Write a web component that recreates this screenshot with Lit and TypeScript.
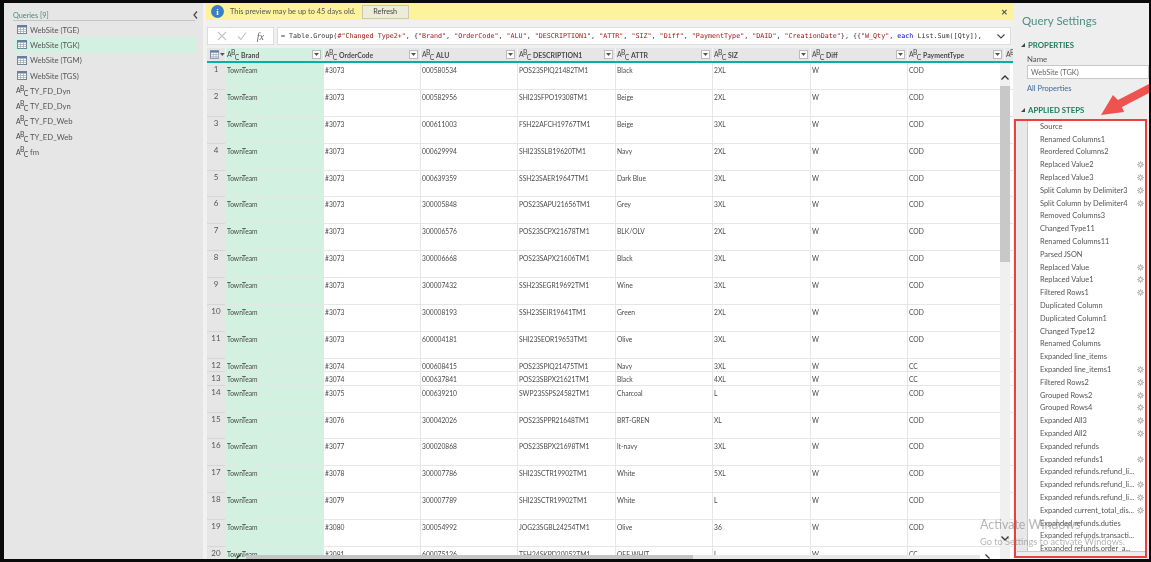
import { LitElement, html, css, svg } from "lit";
import { customElement } from "lit/decorators.js";

const QUERIES: [string, string, boolean][] = [
  ["WebSite (TGE)", "t", false], ["WebSite (TGK)", "t", true], ["WebSite (TGM)", "t", false], ["WebSite (TGS)", "t", false],
  ["TY_FD_Dyn", "a", false], ["TY_ED_Dyn", "a", false], ["TY_FD_Web", "a", false], ["TY_ED_Web", "a", false], ["fm", "a", false],
];
const COLS = ["Brand", "OrderCode", "ALU", "DESCRIPTION1", "ATTR", "SIZ", "Diff", "PaymentType", ""];
const ROWS: [string, string, string, string, string, string, boolean?][] = [
  ["#3073", "000580534", "POS23SPIQ21482TM1", "Black", "2XL", "COD"],
  ["#3073", "000582956", "SHI23SFPO19308TM1", "Beige", "2XL", "COD"],
  ["#3073", "000611003", "FSH22AFCH19767TM1", "Beige", "3XL", "COD"],
  ["#3073", "000629994", "SHI23SSLB19620TM1", "Navy", "2XL", "COD"],
  ["#3073", "000639359", "SSH23SAER19647TM1", "Dark Blue", "3XL", "COD"],
  ["#3073", "300005848", "POS23SAPU21656TM1", "Grey", "3XL", "COD"],
  ["#3073", "300006576", "POS23SCPX21678TM1", "BLK/OLV", "2XL", "COD"],
  ["#3073", "300006668", "POS23SAPX21606TM1", "Black", "3XL", "COD"],
  ["#3073", "300007432", "SSH23SEGR19692TM1", "Wine", "3XL", "COD"],
  ["#3073", "300008193", "SSH23SEIR19641TM1", "Green", "2XL", "COD"],
  ["#3073", "600004181", "SHI23SEOR19653TM1", "Olive", "3XL", "COD"],
  ["#3074", "000608415", "POS23SPIQ21475TM1", "Navy", "3XL", "CC", true],
  ["#3074", "000637841", "POS23SBPX21621TM1", "Black", "4XL", "CC", true],
  ["#3075", "000639210", "SWP23SSPS24582TM1", "Charcoal", "L", "COD"],
  ["#3076", "300042026", "POS23SPPR21648TM1", "BRT-GREN", "XL", "COD"],
  ["#3077", "300020868", "POS23SBPX21698TM1", "lt-navy", "3XL", "COD"],
  ["#3078", "300007786", "SHI23SCTR19902TM1", "White", "5XL", "COD"],
  ["#3079", "300007789", "SHI23SCTR19902TM1", "White", "L", "COD"],
  ["#3080", "300054992", "JOG23SGBL24254TM1", "Olive", "36", "COD"],
  ["#3081", "600075126", "TEH24SKPD20052TM1", "OFF WHIT", "L", "CC"],
];
const STEPS: [string, boolean][] = [
  ["Source", false], ["Renamed Columns1", false], ["Reordered Columns2", false], ["Replaced Value2", true], ["Replaced Value3", true],
  ["Split Column by Delimiter3", true], ["Split Column by Delimiter4", true], ["Removed Columns3", false], ["Changed Type11", false],
  ["Renamed Columns11", false], ["Parsed JSON", false], ["Replaced Value", true], ["Replaced Value1", true], ["Filtered Rows1", true],
  ["Duplicated Column", false], ["Duplicated Column1", false], ["Changed Type12", false], ["Renamed Columns", false],
  ["Expanded line_items", false], ["Expanded line_items1", true], ["Filtered Rows2", true], ["Grouped Rows2", true], ["Grouped Rows4", true],
  ["Expanded All3", true], ["Expanded All2", true], ["Expanded refunds", false], ["Expanded refunds1", true],
  ["Expanded refunds.refund_li...", false], ["Expanded refunds.refund_li...", true], ["Expanded refunds.refund_li...", true],
  ["Expanded current_total_dis...", true], ["Expanded refunds.duties", false], ["Expanded refunds.transacti...", false], ["Expanded refunds.order_a...", false],
];

const abc = () => html`<span class="abc"><span class="la">A</span><span class="lb">B</span><span class="lc">C</span></span>`;
const tableIcon = svg`<svg class="ti" viewBox="0 0 10 9" width="10" height="9"><rect x=".5" y=".5" width="9" height="8" fill="#fff" stroke="#6f8296"/><rect x=".5" y=".5" width="9" height="2" fill="#5f7f9f"/><path d="M3.5 2.5v6M6.5 2.5v6M.5 4.5h9M.5 6.5h9" stroke="#9aa6b2" stroke-width=".7"/></svg>`;
const gear = svg`<svg class="gear" viewBox="0 0 8 8" width="7" height="7"><circle cx="4" cy="4" r="2" fill="none" stroke="#999" stroke-width="1.1"/><path d="M4 0v1.600M4 6.400V8M0 4h1.600M6.400 4H8M1.200 1.200l1.100 1.100M5.700 5.700l1.100 1.100M6.800 1.200L5.700 2.300M2.300 5.700L1.200 6.800" stroke="#999" stroke-width=".8"/></svg>`;
const drop = svg`<svg viewBox="0 0 5 3" width="5" height="3"><path d="M0 0h5L2.500 3z" fill="#555"/></svg>`;

@customElement("app-root")
export class AppRoot extends LitElement {
  static styles = css`
    :host { display: block; width: 1151px; height: 562px; overflow: hidden; font-family: "Lato", "Open Sans", sans-serif; color: #444; }
    * { box-sizing: border-box; }
    .app { position: relative; width: 1151px; height: 562px; display: flex; background: #eee; border: solid #0a0a0a; border-width: 3px 2px 3px 4px; filter: blur(0.4px); overflow: hidden; }

    .abc { display: inline-flex; justify-content: flex-start; width: 11px; height: 12px; font-size: 6.800px; line-height: 7px; letter-spacing: -0.6px; color: #444; flex: none; font-weight: 400; }
    .la { align-self: center; }
    .lb { align-self: flex-start; }
    .lc { align-self: flex-end; }

    .left { width: 199px; background: #e6e6e6; padding: 9px 0 0 9px; flex: none; }
    .lhead { display: flex; align-items: center; height: 8px; }
    .qt { width: 178px; line-height: 8px; font-size: 7.300px; color: #3f8f6f; }
    .lline { width: 182px; height: 1px; background: #c4c4c4; margin-bottom: 1px; }
    .chev { margin-left: 2px; margin-top: -3px; }
    .q { width: 182px; height: 15.3px; display: flex; align-items: center; gap: 3px; padding-left: 3px; font-size: 7.700px; color: #555; }
    .q.sel { background: #d3f1e1; }
    .qi { width: 11px; display: flex; justify-content: center; flex: none; }

    .sep { width: 3px; background: #f2f2f2; flex: none; }

    .main { width: 807px; flex: none; display: flex; flex-direction: column; background: #f0f0f0; position: relative; overflow: hidden; }
    .warn { height: 17px; background: #fdf39d; display: flex; align-items: center; padding-left: 5px; font-size: 7.400px; color: #555; flex: none; }
    .info { width: 13px; height: 13px; border-radius: 50%; background: #3a7fc4; color: #fff; font: bold 9px "Liberation Serif", serif; display: flex; align-items: center; justify-content: center; margin-right: 6px; }
    .refresh { margin-left: 6px; width: 47px; height: 14px; background: #ececd8; border: 1px solid #c8c8b4; font-size: 7.200px; display: flex; align-items: center; justify-content: center; color: #444; }
    .close { margin-left: auto; margin-right: 5px; font-size: 8px; color: #555; font-weight: 700; }

    .fbar { display: flex; height: 18px; margin: 7px 2px 3px 1px; gap: 3px; flex: none; }
    .fbtn { width: 67px; background: #fff; border: 1px solid #dcdcdc; display: flex; align-items: center; justify-content: space-around; padding: 0 4px; }
    .fx { font: italic 10px "Liberation Serif", serif; color: #666; }
    .formula { flex: 1; background: #fff; border: 1px solid #dcdcdc; display: flex; align-items: center; padding-left: 3px; font: 6.700px "DejaVu Sans Mono", monospace; color: #333; white-space: pre; overflow: hidden; }
    .str { color: #a31515; }
    .kw { color: #0000e0; }
    .fexp { margin-left: auto; margin-right: 5px; flex: none; }

    .grid { margin-left: 1px; flex: 1; overflow: hidden; }
    .r { display: grid; grid-template-columns: 18px 98px 97px 97px 98px 97px 98px 97px 97px 20px; }
    .hr { height: 15px; background: #e6e6e6; border-bottom: 2px solid #00b39e; }
    .hc { display: flex; align-items: center; height: 13px; padding: 0 2px 0 1px; gap: 3px; font-size: 6.900px; font-weight: 700; color: #4a4a4a; border-left: 1px solid #f6f6f6; overflow: hidden; }
    .hc.sel { background: #d3f1e1; }
    .nm { flex: 1; white-space: nowrap; }
    .dd { width: 9px; height: 9px; background: #fff; border: 1px solid #bbb; display: flex; align-items: center; justify-content: center; flex: none; }
    .corner { display: flex; align-items: center; gap: 1px; padding-left: 3px; }
    .n { background: #e6e6e6; font-size: 8px; text-align: center; color: #555; border-bottom: 1.500px solid #d6d6d6; padding-top: 1px; }
    .cell { background: #fff; font-size: 6.700px; color: #4a4a4a; padding: 3px 0 0 1px; border-left: 1px solid #e6e6e6; border-bottom: 1.500px solid #e6e6e6; white-space: nowrap; overflow: hidden; }
    .cell.sel { background: #d3f1e1; }
    .tall { height: 26.9px; }
    .short { height: 13.45px; }

    .vs { position: absolute; right: 3px; top: 60px; bottom: 0; width: 10px; background: #f0f0f0; display: flex; flex-direction: column; align-items: center; }
    .up { height: 23px; display: flex; align-items: center; flex: none; padding-top: 6px; }
    .vth { width: 10px; height: 176px; background: #c8c8c8; flex: none; }
    .dn { margin-top: auto; margin-bottom: 15px; }
    .hs { position: absolute; left: 40px; right: 33px; bottom: 0; height: 4px; background: #e8e8e8; }
    .hth { width: 447px; height: 4px; background: #c4c4c4; }
    .hl, .hrr { position: absolute; bottom: 0; display: flex; }
    .hl { left: 30px; }
    .hrr { right: 23px; }

    .right { flex: 1; background: #eee; padding: 10px 0 0 9px; min-width: 0; position: relative; }
    .title { font-size: 11.500px; line-height: 16px; color: #4e8f80; white-space: nowrap; }
    .sec { font-size: 7.800px; font-weight: 700; color: #1e7d5d; display: flex; align-items: center; gap: 3px; height: 10px; margin-left: -1px; white-space: nowrap; }
    .tri { width: 0; height: 0; border-style: solid; border-width: 0 0 4px 4px; border-color: transparent transparent #444 transparent; }
    .sec.p { margin-top: 11px; }
    .lab { font-size: 7.800px; margin: 5px 0 0 5px; height: 9px; line-height: 9px; color: #555; }
    .input { height: 14px; margin: 1px 0 0 5px; background: #fff; border: 1px solid #c8c8c8; font-size: 7.400px; display: flex; align-items: center; padding-left: 3px; color: #666; }
    .link { font-size: 7.500px; color: #3d6a9e; margin: 5px 0 0 5px; height: 10px; line-height: 10px; }
    .sec.a { margin-top: 11px; }
    .steps { margin: 4px 0 0 -5px; display: flex; width: 128px; height: 433px; overflow: hidden; border-bottom: 1px solid #c8c8c8; }
    .strip { width: 10px; background: #e8e8e8; flex: none; }
    .list { flex: 1; background: #fff; padding-top: 1px; border-left: 1px solid #c8c8c8; overflow: hidden; }
    .s { height: 12.8px; display: flex; align-items: center; padding-left: 12px; font-size: 7.450px; color: #555; white-space: nowrap; }
    .gear { margin-left: auto; margin-right: 1px; flex: none; }

    .redbox { position: absolute; left: 1010px; top: 116px; width: 133px; height: 439px; border: 2px solid #e8413f; pointer-events: none; }
    .arrow { position: absolute; left: 1090px; top: 72px; }
    .wm1, .wm2 { position: absolute; white-space: nowrap; color: rgba(120,120,120,.55); }
    .wm1 { left: 976px; top: 514px; font-size: 12.500px; }
    .wm2 { left: 976px; top: 533px; font-size: 9.200px; }
  `;

  private fmla() {
    const s = (t: string) => html`<span class="str">${t}</span>`;
    return html`= Table.Group(${s('#"Changed Type2+"')}, {${s('"Brand"')}, ${s('"OrderCode"')}, ${s('"ALU"')}, ${s('"DESCRIPTION1"')}, ${s('"ATTR"')}, ${s('"SIZ"')}, ${s('"Diff"')}, ${s('"PaymentType"')}, ${s('"DAID"')}, ${s('"CreationDate"')}}, {{${s('"W_Qty"')}, <span class="kw">each</span> List.Sum([Qty]),`;
  }

  render() {
    return html`<div class="app">
      <aside class="left">
        <div class="lhead"><div class="qt">Queries [9]</div>
          <svg class="chev" viewBox="0 0 5 8" width="5" height="8"><path d="M4 .5L1 4l3 3.500" fill="none" stroke="#444" stroke-width="1.200"/></svg></div>
        <div class="lline"></div>
        ${QUERIES.map(([n, k, sel]) => html`<div class="q ${sel ? "sel" : ""}"><span class="qi">${k === "t" ? tableIcon : abc()}</span>${n}</div>`)}
      </aside>
      <div class="sep"></div>
      <main class="main">
        <div class="warn"><span class="info">i</span><span>This preview may be up to 45 days old.</span><span class="refresh">Refresh</span><span class="close">✕</span></div>
        <div class="fbar">
          <div class="fbtn">
            <svg viewBox="0 0 10 10" width="10" height="10"><path d="M1 1l8 8M9 1l-8 8" stroke="#c4c4c4" stroke-width="1.100"/></svg>
            <svg viewBox="0 0 10 10" width="10" height="10"><path d="M1 5.500l3 3 5-7" fill="none" stroke="#c4c4c4" stroke-width="1.100"/></svg>
            <span class="fx">fx</span>
          </div>
          <div class="formula">${this.fmla()}<svg class="fexp" viewBox="0 0 8 5" width="8" height="5"><path d="M.5.5L4 4 7.500.5" fill="none" stroke="#444" stroke-width="1.100"/></svg></div>
        </div>
        <div class="grid">
          <div class="r hr">
            <div class="corner">${tableIcon}${drop}</div>
            ${COLS.map((c, i) => html`<div class="hc ${i === 0 ? "sel" : ""}">${abc()}<span class="nm">${c}</span>${c ? html`<span class="dd">${drop}</span>` : ""}</div>`)}
          </div>
          ${ROWS.map((r, i) => html`<div class="r ${r[6] ? "short" : "tall"}">
            <div class="n">${i + 1}</div>
            <div class="cell sel">TownTeam</div>
            <div class="cell">${r[0]}</div><div class="cell">${r[1]}</div><div class="cell">${r[2]}</div>
            <div class="cell">${r[3]}</div><div class="cell">${r[4]}</div><div class="cell">W</div><div class="cell">${r[5]}</div><div class="cell"></div>
          </div>`)}
        </div>
        <div class="vs">
          <div class="up"><svg viewBox="0 0 8 5" width="8" height="5"><path d="M.5 4.500L4 1l3.500 3.500" fill="none" stroke="#333" stroke-width="1.300"/></svg></div>
          <div class="vth"></div>
          <div class="dn"><svg viewBox="0 0 8 5" width="8" height="5"><path d="M.5.5L4 4 7.500.5" fill="none" stroke="#333" stroke-width="1.300"/></svg></div>
        </div>
        <div class="hs"><div class="hth"></div></div>
        <div class="hl"><svg viewBox="0 0 5 5" width="5" height="5"><path d="M4.500.5L.5 4.500" fill="none" stroke="#333" stroke-width="1.300"/></svg></div>
        <div class="hrr"><svg viewBox="0 0 5 5" width="5" height="5"><path d="M.5.5L4.500 4.500" fill="none" stroke="#333" stroke-width="1.300"/></svg></div>
      </main>
      <aside class="right">
        <div class="title">Query Settings</div>
        <div class="sec p"><span class="tri"></span>PROPERTIES</div>
        <div class="lab">Name</div>
        <div class="input">WebSite (TGK)</div>
        <div class="link">All Properties</div>
        <div class="sec a"><span class="tri"></span>APPLIED STEPS</div>
        <div class="steps"><div class="strip"></div><div class="list">
          ${STEPS.map(([s, g]) => html`<div class="s">${s}${g ? gear : ""}</div>`)}
        </div></div>
      </aside>
      <div class="wm1">Activate Windows</div>
      <div class="wm2">Go to Settings to activate Windows.</div>
      <div class="redbox"></div>
      <svg class="arrow" viewBox="0 0 60 50" width="60" height="50"><polygon points="7,40 19,20 24,25 55,9 55,18 28,32 30,37" fill="#ee534f"/></svg>
    </div>`;
  }
}
